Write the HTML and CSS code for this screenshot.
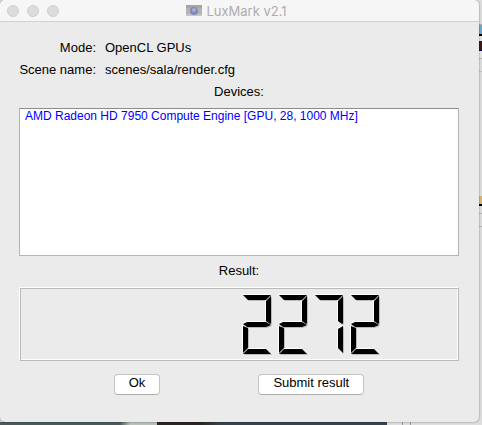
FILE: index.html
```html
<!DOCTYPE html>
<html lang="en">
<head>
  <meta charset="UTF-8" />
  <meta name="viewport" content="width=device-width, initial-scale=1.0"/>
  <title>LuxMark v2.1</title>
  <link rel="stylesheet" href="styles.css">
</head>
<body>
  <div class="behind-right"></div>
  <div class="window">
    <header class="titlebar">
      <div class="lights"><span></span><span></span><span></span></div>
      <h1>
        <svg width="16" height="11" viewBox="0 0 16 11" aria-hidden="true">
          <rect width="16" height="11" fill="#b4b4b4"/>
          <path d="M0 0h16v3H0z" fill="#a5a5a5"/>
          <path d="M0 9h16v2H0z" fill="#c6c6c6"/>
          <circle cx="8" cy="6" r="4" fill="#8189b3"/>
          <circle cx="8" cy="5" r="2" fill="#a5afd9"/>
        </svg>
        LuxMark v2.1
      </h1>
    </header>

    <main class="content">
      <dl class="info">
        <dt>Mode:</dt>
        <dd>OpenCL GPUs</dd>
        <dt>Scene name:</dt>
        <dd>scenes/sala/render.cfg</dd>
      </dl>

      <h2 id="devicesLabel">Devices:</h2>
      <ul class="devices" aria-labelledby="devicesLabel">
        <li>AMD Radeon HD 7950 Compute Engine [GPU, 28, 1000 MHz]</li>
      </ul>

      <h2 id="resultLabel">Result:</h2>
      <div class="lcd" role="img" aria-label="2272">
        <div class="digit"><i class="top"></i><i class="upper-right"></i><i class="middle"></i><i class="lower-left"></i><i class="bottom"></i></div>
        <div class="digit"><i class="top"></i><i class="upper-right"></i><i class="middle"></i><i class="lower-left"></i><i class="bottom"></i></div>
        <div class="digit"><i class="top"></i><i class="upper-right"></i><i class="lower-right"></i></div>
        <div class="digit"><i class="top"></i><i class="upper-right"></i><i class="middle"></i><i class="lower-left"></i><i class="bottom"></i></div>
      </div>

      <div class="actions">
        <button type="button">Ok</button>
        <button type="button">Submit result</button>
      </div>
    </main>
  </div>
  <div class="behind-bottom"></div>
</body>
</html>
```

FILE: styles.css
```css
:root {
  --window-bg: #ebebeb;
  --titlebar-bg: #f6f6f6;
  --line: #b4b4b4;
  --device-color: #0000ff;
}

* {
  box-sizing: border-box;
}

body {
  font-family: "Liberation Sans", Arial, sans-serif;
  font-size: 13px;
  line-height: 16px;
  color: #000;
  background-color: #dedede;
  margin: 0;
  overflow: hidden;
}

.window {
  position: relative;
  margin-right: 3px;
  background-color: var(--window-bg);
  border-radius: 5px;
  box-shadow: 0 0 2px rgba(0, 0, 0, 0.5);
  overflow: hidden;
}

.titlebar {
  display: grid;
  grid-template-columns: 1fr auto 1fr;
  align-items: center;
  height: 22px;
  padding: 0 13px 0 7px;
  background-color: var(--titlebar-bg);
  border-bottom: 1px solid #d1d1d1;
}

.lights {
  display: flex;
  gap: 8px;
}

.lights span {
  width: 12px;
  height: 12px;
  border: 1px solid #cfcfcf;
  border-radius: 50%;
  background-color: #dcdcdc;
}

h1 {
  display: flex;
  align-items: center;
  gap: 4px;
  margin: 0;
  font-family: Inter, "Liberation Sans", sans-serif;
  font-size: 13px;
  font-weight: 400;
  color: #adadad;
}

.content {
  padding: 18px 20px 27px 19px;
}

.info {
  display: grid;
  grid-template-columns: 77px 1fr;
  gap: 6px 9px;
  margin: 0 0 6px;
}

.info dt {
  text-align: right;
  white-space: nowrap;
}

.info dd {
  margin: 0;
}

h2 {
  margin: 0;
  font-size: 13px;
  font-weight: 400;
  text-align: center;
}

.devices {
  height: 148px;
  margin: 8px 0 7px;
  padding: 0 5px;
  list-style: none;
  font-size: 12px;
  line-height: 14px;
  color: var(--device-color);
  background-color: #fff;
  border: 1px solid var(--line);
  border-top-color: #8c8c8c;
}

.lcd {
  display: flex;
  justify-content: flex-end;
  gap: 8px;
  height: 74px;
  margin-top: 8px;
  padding: 7px 79px 0 0;
  border: 1px solid #fff;
  border-right-color: #bababa;
  border-bottom-color: #bababa;
  box-shadow: inset 1px 1px #bababa, inset -1px -1px #fff;
}

/* seven segment digit, each segment is a clipped box */
.digit {
  display: grid;
  width: 28px;
  height: 59px;
  filter: drop-shadow(-1px -1px 0 #fff) drop-shadow(1px 1px 0 #bababa);
}

.digit i {
  grid-area: 1 / 1;
  background-color: #000;
}

.top {
  clip-path: polygon(0 0, 28px 0, 23px 5px, 5px 5px);
}

.upper-right {
  clip-path: polygon(28px 1px, 28px 28px, 27px 29px, 23px 26px, 23px 6px);
}

.middle {
  clip-path: polygon(0 29px, 4px 27px, 23px 27px, 28px 30px, 23px 32px, 4px 32px);
}

.lower-left {
  clip-path: polygon(0 31px, 5px 33px, 5px 53px, 0 58px);
}

.lower-right {
  clip-path: polygon(28px 31px, 23px 34px, 23px 53px, 28px 58px);
}

.bottom {
  clip-path: polygon(0 59px, 5px 54px, 23px 54px, 28px 59px);
}

.actions {
  display: flex;
  justify-content: center;
  gap: 98px;
  margin-top: 13px;
}

button {
  height: 21px;
  padding: 0 14px 3px;
  font-family: inherit;
  font-size: 13px;
  line-height: 16px;
  color: #000;
  background-color: #fff;
  border: 1px solid #c4c4c4;
  border-bottom-color: #adadad;
  border-radius: 4px;
}

/* windows and desktop showing past the edges */
.behind-right {
  position: absolute;
  top: 0;
  right: 0;
  width: 3px;
  height: 100%;
  background: linear-gradient(#dedede 24px, #b0b0b0 24px 25px, #6fa8c8 25px 34px, #000 34px 36px, #e6e6e6 36px 41px, #3a1a1a 41px 50px, #00003a 50px 51px, #e6e6e6 51px 58px, #b8b8b8 58px 59px, #dedede 59px 71px, #c4c4c4 71px 72px, #dedede 72px 196px, #d8b878 196px 204px, #000 204px 206px, #dedede 206px 213px, #b8b8b8 213px 214px, #dedede 214px 226px, #b8b8b8 226px 227px, #dedede 227px);
}

.behind-bottom {
  height: 3px;
  background: linear-gradient(90deg, #4c5a5c 120px, #b9c2b8 130px 157px, #2d2624 157px 200px, #38434e 220px 387px, #dedede 387px 402px, #999 402px 403px, #dedede 403px 410px, #999 410px 411px, #dedede 411px);
}
```
